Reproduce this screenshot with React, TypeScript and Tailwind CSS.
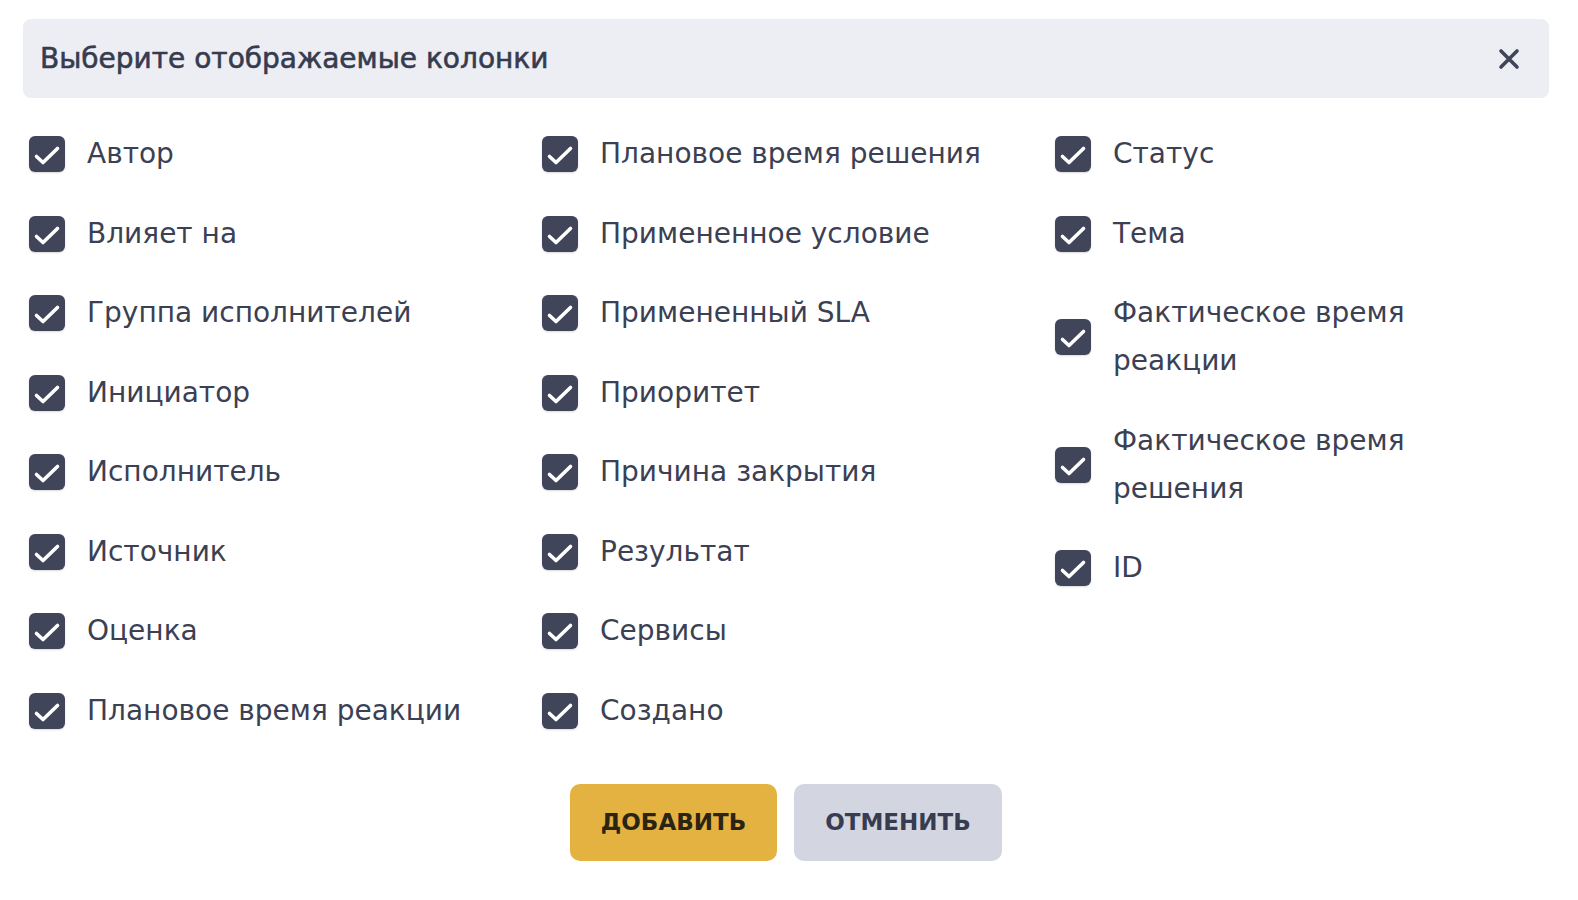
import React from "react";

const col1 = [
  "Автор",
  "Влияет на",
  "Группа исполнителей",
  "Инициатор",
  "Исполнитель",
  "Источник",
  "Оценка",
  "Плановое время реакции",
];

const col2 = [
  "Плановое время решения",
  "Примененное условие",
  "Примененный SLA",
  "Приоритет",
  "Причина закрытия",
  "Результат",
  "Сервисы",
  "Создано",
];

const col3 = [
  "Статус",
  "Тема",
  "Фактическое время реакции",
  "Фактическое время решения",
  "ID",
];

const CheckItem = ({ label }: { label: string }) => {
  return (
    <label className="flex items-center gap-[22px] cursor-pointer">
      <span className="w-9 h-9 shrink-0 rounded-[6px] bg-[#40455a] shadow-[0_1px_2px_rgba(0,0,0,0.15)] flex items-center justify-center">
        <svg width="36" height="36" viewBox="0 0 36 36" fill="none">
          <polyline
            points="7.5,20.5 14,26.5 28.5,12.5"
            stroke="#ffffff"
            strokeWidth="3.6"
            strokeLinecap="round"
            strokeLinejoin="round"
          />
        </svg>
      </span>
      <span className="text-[28px] leading-[48px] text-[#3b4053]">{label}</span>
    </label>
  );
};

const Column = ({ items }: { items: string[] }) => {
  return (
    <div className="flex flex-col gap-y-[31.5px]">
      {items.map((item) => (
        <CheckItem key={item} label={item} />
      ))}
    </div>
  );
};

export default function App() {
  return (
    <div
      className="w-[1578px] h-[900px] bg-white pt-[19px] pl-[23px]"
      style={{ fontFamily: '"DejaVu Sans", "Noto Sans", sans-serif' }}
    >
      <div className="w-[1526px]">
        <div className="h-[79px] rounded-[8px] bg-[#edeef3] flex items-center justify-between pl-[17px] pr-[28px]">
          <h1 className="text-[28px] font-normal text-[#363b4f] [-webkit-text-stroke:0.6px_#363b4f]">
            Выберите отображаемые колонки
          </h1>
          <button className="w-6 h-6 flex items-center justify-center">
            <svg width="22" height="22" viewBox="0 0 22 22" fill="none">
              <path
                d="M3 3 L19 19 M19 3 L3 19"
                stroke="#40455a"
                strokeWidth="3.6"
                strokeLinecap="round"
              />
            </svg>
          </button>
        </div>

        <div className="grid grid-cols-[440px_440px_440px] gap-x-[73px] pl-[6px] pt-[32px]">
          <Column items={col1} />
          <Column items={col2} />
          <Column items={col3} />
        </div>

        <div className="flex justify-center gap-[17px] mt-[49px]">
          <button className="w-[207px] h-[77px] rounded-[10px] bg-[#e4b240] text-[#2a2412] text-[23px] font-bold">
            ДОБАВИТЬ
          </button>
          <button className="w-[208px] h-[77px] rounded-[10px] bg-[#d3d6e1] text-[#373c50] text-[23px] font-bold">
            ОТМЕНИТЬ
          </button>
        </div>
      </div>
    </div>
  );
}
